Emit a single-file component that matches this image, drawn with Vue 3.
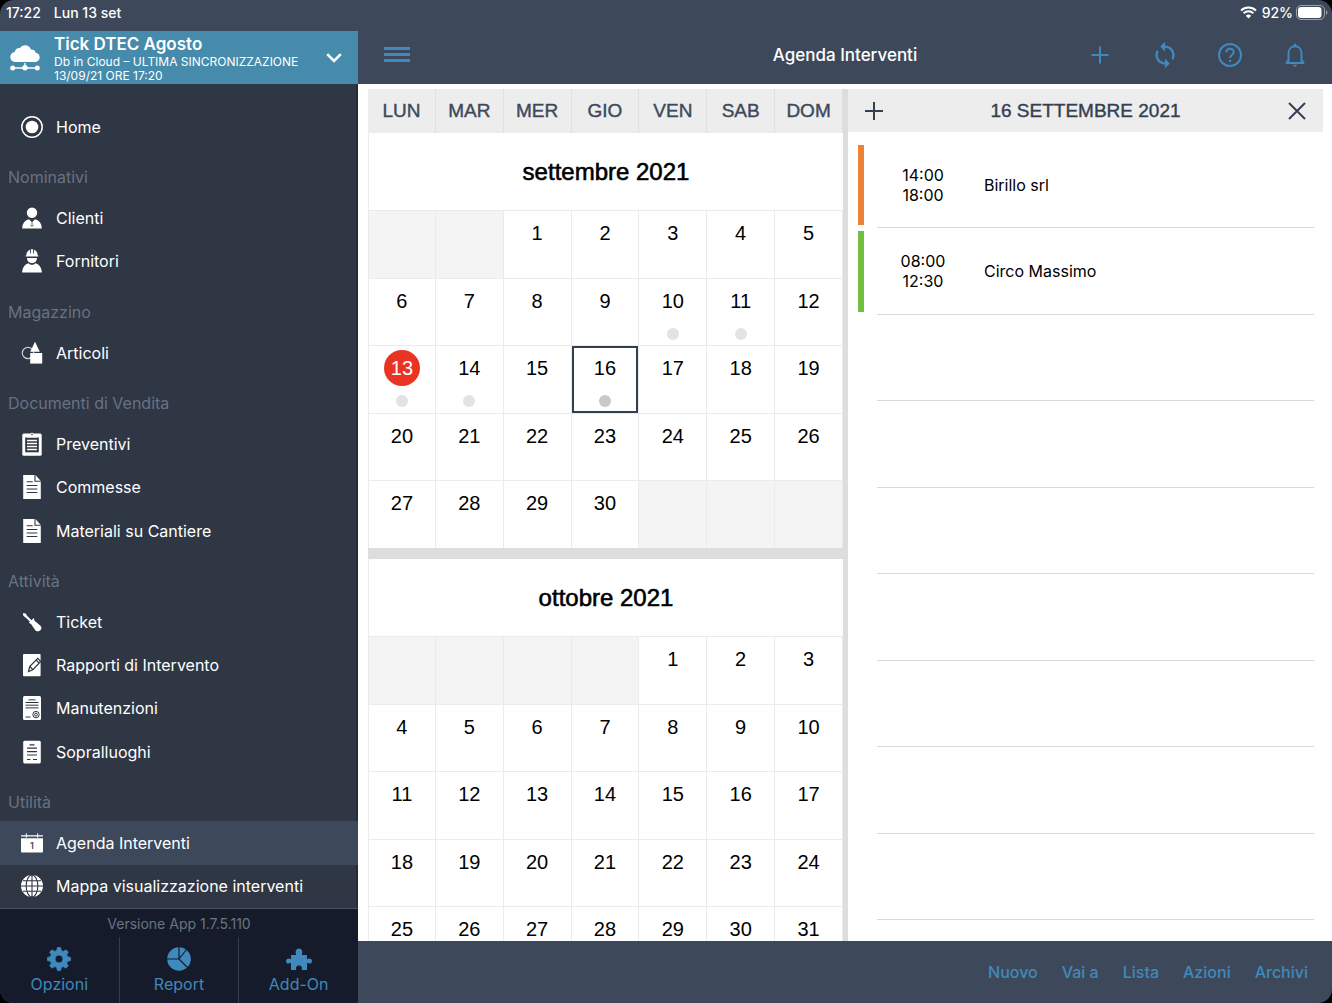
<script setup>
const sections = [
  { items: [{ icon: 'home', label: 'Home' }] },
  {
    title: 'Nominativi',
    items: [
      { icon: 'client', label: 'Clienti' },
      { icon: 'supplier', label: 'Fornitori' },
    ],
  },
  { title: 'Magazzino', items: [{ icon: 'shapes', label: 'Articoli' }] },
  {
    title: 'Documenti di Vendita',
    items: [
      { icon: 'clipboard', label: 'Preventivi' },
      { icon: 'document', label: 'Commesse' },
      { icon: 'document', label: 'Materiali su Cantiere' },
    ],
  },
  {
    title: 'Attività',
    items: [
      { icon: 'screwdriver', label: 'Ticket' },
      { icon: 'report', label: 'Rapporti di Intervento' },
      { icon: 'certificate', label: 'Manutenzioni' },
      { icon: 'survey', label: 'Sopralluoghi' },
    ],
  },
  {
    title: 'Utilità',
    items: [
      { icon: 'agenda', label: 'Agenda Interventi', digit: '1', active: true },
      { icon: 'globe', label: 'Mappa visualizzazione interventi' },
    ],
  },
]

const tools = [
  { icon: 'gear', label: 'Opzioni' },
  { icon: 'pie', label: 'Report' },
  { icon: 'puzzle', label: 'Add-On' },
]

const headerActions = [
  { icon: 'plus', label: 'Aggiungi' },
  { icon: 'sync', label: 'Sincronizza' },
  { icon: 'help', label: 'Aiuto' },
  { icon: 'bell', label: 'Notifiche' },
]

const weekdays = ['LUN', 'MAR', 'MER', 'GIO', 'VEN', 'SAB', 'DOM']

function buildWeeks(offset, days) {
  const count = Math.ceil((offset + days) / 7)
  return Array.from({ length: count }, (_, week) =>
    Array.from({ length: 7 }, (_, i) => {
      const day = week * 7 + i - offset + 1
      return day >= 1 && day <= days ? day : null
    })
  )
}

const months = [
  { name: 'settembre 2021', weeks: buildWeeks(2, 30), busy: [10, 11, 13, 14, 16], today: 13, selected: 16 },
  { name: 'ottobre 2021', weeks: buildWeeks(4, 31), busy: [] },
]

const appointments = [
  { from: '14:00', to: '18:00', name: 'Birillo srl', color: 'orange' },
  { from: '08:00', to: '12:30', name: 'Circo Massimo', color: 'green' },
]
const emptySlots = 7

const footerActions = ['Nuovo', 'Vai a', 'Lista', 'Azioni', 'Archivi']
</script>

<template>
  <div class="app">
    <svg class="sprite" aria-hidden="true">
      <symbol id="i-home" viewBox="0 0 24 24">
        <circle cx="12" cy="12" r="10.2" fill="none" stroke="currentColor" stroke-width="1.5" />
        <circle cx="12" cy="12" r="6.3" fill="currentColor" />
      </symbol>
      <symbol id="i-client" viewBox="0 0 24 24">
        <circle cx="12" cy="6.8" r="5.2" fill="currentColor" />
        <path d="M2.2 22.500c0-4.500 2.300-8.200 6.800-9.300l3 3 3-3c4.500 1.100 6.800 4.800 6.800 9.300z" fill="currentColor" />
        <path d="M10.600 14l1.400-.8 1.400.8-.7 1.400.7 4-1.400 1.400-1.400-1.400.7-4z" fill="var(--nav)" />
        <path d="M11.500 15.500h1l.3 3.600-.8.800-.8-.8z" fill="currentColor" />
      </symbol>
      <symbol id="i-supplier" viewBox="0 0 24 24">
        <path d="M6.300 6.500C6.300 3.300 8 1.400 10 .8v3.700h.8V.3h2.400v4.200h.8V.8c2 .6 3.700 2.500 3.700 5.700l.6.100v1H5.700v-1z" fill="currentColor" />
        <path d="M7 9h10c0 3-2.200 5.200-5 5.200S7 12 7 9z" fill="currentColor" />
        <path d="M2.200 23.500c0-4.500 2.300-8 6.300-9.300 2.100 2 4.900 2 7 0 4 1.300 6.300 4.800 6.300 9.300z" fill="currentColor" />
      </symbol>
      <symbol id="i-shapes" viewBox="0 0 24 24">
        <circle cx="8" cy="12" r="5.700" fill="none" stroke="currentColor" stroke-width="1.200" opacity=".75" />
        <path d="M15 .8l4.800 10H10.200z" fill="currentColor" />
        <path d="M10.200 12h12v10.600h-12z" fill="currentColor" />
      </symbol>
      <symbol id="i-clipboard" viewBox="0 0 24 24">
        <rect x="2.300" y="1.500" width="19.400" height="22.300" rx="1.500" fill="currentColor" />
        <rect x="5.200" y="5.500" width="13.600" height="14.800" fill="var(--nav)" />
        <path d="M6.800 5.600V3.500h3c0-3.800 4.400-3.800 4.400 0h3v2.100z" fill="currentColor" />
        <circle cx="12" cy="2.500" r=".8" fill="var(--nav)" />
        <path d="M7 8.500h10M7 11.500h10M7 14.500h10M7 17.500h10" stroke="currentColor" stroke-width="1.300" />
      </symbol>
      <symbol id="i-document" viewBox="0 0 24 24">
        <path d="M3.200 0h12.300l5.300 6v18H3.200z" fill="currentColor" />
        <path d="M15 0v6.300h5.800M6.700 6.700h6M6.700 10.500h10.600M6.700 14h10.600M6.700 17.500h10.600" fill="none" stroke="var(--nav)" stroke-width="1.100" />
      </symbol>
      <symbol id="i-screwdriver" viewBox="0 0 24 24">
        <path d="M4 4.200l7.500 7.500" stroke="currentColor" stroke-width="2.200" />
        <path d="M3 3l3 .8 1 2.400-1.500 1.200L3.300 5.400z" fill="currentColor" />
        <path d="M8.800 12.800l5-4.700.7 2.600 6 5c2.900 3.300-1.900 7.500-5 4.700l-4.500-6.400z" fill="currentColor" />
      </symbol>
      <symbol id="i-report" viewBox="0 0 24 24">
        <rect x="3" y="1" width="17.600" height="22.200" rx="1" fill="currentColor" />
        <path d="M8.500 18.500l1.200-5 8-8.200 3 3.200-7.800 8.200zM9.700 13.500l3.200 3.200M16 7l3.200 3.200" fill="currentColor" stroke="var(--nav)" stroke-width="1.200" />
      </symbol>
      <symbol id="i-certificate" viewBox="0 0 24 24">
        <rect x="3" y="0" width="18" height="24" rx="1.500" fill="currentColor" />
        <path d="M8.500 3.800h7M5.500 6.500h13M5.500 9.200h13M5.500 11.900h13M5.500 21h5" stroke="var(--nav)" stroke-width="1" />
        <circle cx="16" cy="18.600" r="3.200" fill="none" stroke="var(--nav)" stroke-width="1" />
        <circle cx="16" cy="18.600" r="1.400" fill="none" stroke="var(--nav)" stroke-width="1" />
      </symbol>
      <symbol id="i-survey" viewBox="0 0 24 24">
        <rect x="3.200" y=".8" width="17.600" height="22.600" rx="1.500" fill="currentColor" />
        <path d="M9.500 4.800h5M7 8.200h10M7 11.700h10M7 15h10M7 19.500h3.500M13 19.500h4" stroke="var(--nav)" stroke-width="1.200" />
      </symbol>
      <symbol id="i-agenda" viewBox="0 0 24 24">
        <path d="M1 5.500V4.200h22v1.300zM5.800 2.500h1.200v4H5.800zM17 2.500h1.200v4H17z" fill="currentColor" />
        <path d="M1 7.200h22v13.600q0 .8-.8.800H1.800q-.8 0-.8-.8z" fill="currentColor" />
      </symbol>
      <symbol id="i-globe" viewBox="0 0 24 24">
        <circle cx="12" cy="12" r="11" fill="currentColor" />
        <path d="M12 1v22M1 12h22M3 6.800h18M3 17.200h18" fill="none" stroke="var(--nav)" stroke-width="1.100" />
        <ellipse cx="12" cy="12" rx="5.800" ry="11" fill="none" stroke="var(--nav)" stroke-width="1.100" />
      </symbol>
      <symbol id="i-gear" viewBox="0 0 24 24">
        <path fill="currentColor" fill-rule="evenodd" stroke="currentColor" stroke-width=".8" stroke-linejoin="round" d="M10.400.5h3.200l.7 3 2.100.9 2.600-1.600 2.300 2.300-1.600 2.600.9 2 2.900.7v3.200l-2.900.7-.9 2 1.600 2.600-2.300 2.300-2.600-1.600-2.100.9-.7 3h-3.200l-.7-3-2.100-.9L5 21.200l-2.300-2.300 1.600-2.600-.9-2-2.900-.7v-3.200l2.900-.7.9-2-1.600-2.600L5 2.800l2.600 1.600 2.100-.9zM12 8a4 4 0 1 0 0 8 4 4 0 0 0 0-8z" />
      </symbol>
      <symbol id="i-pie" viewBox="0 0 24 24">
        <circle cx="12" cy="12" r="11.800" fill="currentColor" />
        <path d="M12 0v12M0 12h12l8.500 8.500M12 12l7.500-9.500" fill="none" stroke="var(--foot)" stroke-width="1.200" />
      </symbol>
      <symbol id="i-puzzle" viewBox="0 0 26 24">
        <path fill="currentColor" d="M5 8h5.200C8.900 4.700 10 1.500 13 1.500s4.100 3.200 2.800 6.500H21v4.300c2.200-1.500 5-1 5 1.700s-2.800 3.200-5 1.700V23h-5.300c.9-3-.5-4.500-2.700-4.500s-3.600 1.500-2.700 4.500H5v-7.300c-2.200 1.500-5 1-5-1.700s2.800-3.200 5-1.700z" />
      </symbol>
      <symbol id="i-plus" viewBox="0 0 24 24">
        <path d="M12 3.500v17M3.500 12h17" stroke="currentColor" stroke-width="2" />
      </symbol>
      <symbol id="i-sync" viewBox="2 2 20 20">
        <path fill="currentColor" d="M12 4V1L8 5l4 4V6c3.310 0 6 2.690 6 6 0 1.010-.25 1.970-.7 2.800l1.460 1.460C19.540 15.030 20 13.570 20 12c0-4.420-3.580-8-8-8zm0 14c-3.310 0-6-2.690-6-6 0-1.010.25-1.970.7-2.800L5.240 7.740C4.460 8.970 4 10.430 4 12c0 4.420 3.580 8 8 8v3l4-4-4-4v3z" />
      </symbol>
      <symbol id="i-help" viewBox="0 0 24 24">
        <circle cx="12" cy="12" r="11" fill="none" stroke="currentColor" stroke-width="2" />
        <path d="M8.400 9.300c0-4.700 7.300-4.700 7.300-.2 0 2.800-3.600 3-3.600 6" fill="none" stroke="currentColor" stroke-width="2" />
        <circle cx="12.100" cy="18" r="1.300" fill="currentColor" />
      </symbol>
      <symbol id="i-bell" viewBox="0 0 24 24">
        <path d="M2.700 20h18.600M5.500 19.500V10.300c0-4 2.600-7 6.500-7s6.500 3 6.500 7v9.200M3.500 19.500l2-2.500M20.500 19.500l-2-2.500" fill="none" stroke="currentColor" stroke-width="2" />
        <path d="M10.500 3c0-3.500 3-3.500 3 0zM9.800 21.800h4.400c-.4 2.400-4 2.400-4.400 0z" fill="currentColor" />
      </symbol>
    </svg>

    <header class="status">
      <time>17:22</time>
      <span class="status-date">Lun 13 set</span>
      <svg class="wifi" viewBox="0 0 17 13" aria-hidden="true">
        <path d="M1 4.600a10.800 10.800 0 0 1 15 0M3.600 7.300a7 7 0 0 1 9.800 0" fill="none" stroke="currentColor" stroke-width="2" />
        <path d="M8.500 12.500L5.800 9.700a3.900 3.900 0 0 1 5.400 0z" fill="currentColor" />
      </svg>
      <span>92%</span>
      <svg class="battery" viewBox="0 0 32 15" aria-hidden="true">
        <rect x=".5" y=".5" width="28" height="14" rx="4.500" fill="none" stroke="#9aa1ac" />
        <rect x="2" y="2" width="23.500" height="11" rx="3" fill="#fff" />
        <path d="M30 5.200q1.500.8 1.500 2.300T30 9.800z" fill="#9aa1ac" />
      </svg>
    </header>

    <div class="body">
      <aside class="sidebar">
        <button class="account" type="button">
          <svg class="cloud" viewBox="0 0 30 26" aria-hidden="true">
            <path fill="currentColor" d="M6.500 17C2.500 17 .3 14.800.3 11.900c0-2.900 2-4.700 4.400-5C5.300 4 7.600 2.600 10 3.100 11.200 1.100 13 .3 15 .3c3 0 5.200 1.700 6 4.300 2.500-.2 4.200 1.100 4.600 3.100 2.600.5 4.100 2.200 4.100 4.500 0 2.900-2.200 4.800-5.500 4.800z" />
            <path d="M15 18v5M2.500 23h25" stroke="currentColor" stroke-width="1.400" />
            <circle cx="2.700" cy="23" r="2.500" fill="currentColor" />
            <circle cx="15" cy="22.800" r="2.700" fill="currentColor" />
            <circle cx="27.300" cy="23" r="2.500" fill="currentColor" />
          </svg>
          <span class="account-text">
            <strong>Tick DTEC Agosto</strong>
            <small>Db in Cloud – ULTIMA SINCRONIZZAZIONE</small>
            <small>13/09/21 ORE 17:20</small>
          </span>
          <svg class="chevron" viewBox="0 0 16 10" aria-hidden="true">
            <path d="M1.200 1.200L8 8l6.800-6.800" fill="none" stroke="currentColor" stroke-width="2.600" />
          </svg>
        </button>

        <nav class="nav">
          <template v-for="(section, s) in sections" :key="s">
            <h2 v-if="section.title" class="nav-title">{{ section.title }}</h2>
            <a
              v-for="item in section.items"
              :key="item.label"
              href="#"
              class="nav-item"
              :class="{ active: item.active }"
            >
              <svg class="nav-icon" aria-hidden="true">
                <use :href="'#i-' + item.icon" />
                <text v-if="item.digit" class="icon-digit" x="12" y="18" text-anchor="middle">{{ item.digit }}</text>
              </svg>
              {{ item.label }}
            </a>
          </template>
        </nav>

        <div class="side-foot">
          <p class="version">Versione App 1.7.5.110</p>
          <div class="tools">
            <button v-for="tool in tools" :key="tool.label" type="button" class="tool">
              <svg class="tool-icon" aria-hidden="true"><use :href="'#i-' + tool.icon" /></svg>
              {{ tool.label }}
            </button>
          </div>
        </div>
      </aside>

      <main class="main">
        <div class="topbar">
          <button type="button" class="menu" aria-label="Menu"><i /><i /><i /></button>
          <h1>Agenda Interventi</h1>
          <div class="top-actions">
            <button v-for="action in headerActions" :key="action.icon" type="button" :aria-label="action.label">
              <svg aria-hidden="true"><use :href="'#i-' + action.icon" /></svg>
            </button>
          </div>
        </div>

        <div class="content">
          <section class="calendar">
            <div class="weekdays">
              <span v-for="day in weekdays" :key="day">{{ day }}</span>
            </div>
            <div class="months">
              <table v-for="month in months" :key="month.name" class="month">
                <caption>{{ month.name }}</caption>
                <tbody>
                  <tr v-for="(week, w) in month.weeks" :key="w">
                    <td
                      v-for="(day, d) in week"
                      :key="d"
                      :class="{ blank: !day, selected: day && day === month.selected }"
                    >
                      <button
                        v-if="day"
                        type="button"
                        class="day"
                        :class="{ today: day === month.today }"
                      >
                        <span class="number">{{ day }}</span>
                        <span v-if="month.busy.includes(day)" class="dot" />
                      </button>
                    </td>
                  </tr>
                </tbody>
              </table>
            </div>
          </section>

          <section class="agenda">
            <div class="agenda-head">
              <button type="button" aria-label="Nuovo intervento">
                <svg viewBox="0 0 18 18" aria-hidden="true"><path d="M9 0v18M0 9h18" stroke="currentColor" stroke-width="2" /></svg>
              </button>
              <h2>16 SETTEMBRE 2021</h2>
              <button type="button" aria-label="Chiudi">
                <svg viewBox="0 0 18 18" aria-hidden="true"><path d="M1 1l16 16M17 1L1 17" stroke="currentColor" stroke-width="2" /></svg>
              </button>
            </div>
            <ul class="slots">
              <li v-for="item in appointments" :key="item.name">
                <span class="marker" :class="item.color" />
                <div class="slot">
                  <span class="hours"><time>{{ item.from }}</time><time>{{ item.to }}</time></span>
                  <span>{{ item.name }}</span>
                </div>
              </li>
              <li v-for="n in emptySlots" :key="n">
                <span class="marker" />
                <div class="slot" />
              </li>
            </ul>
          </section>
        </div>

        <footer class="bottombar">
          <button v-for="label in footerActions" :key="label" type="button">{{ label }}</button>
        </footer>
      </main>
    </div>
  </div>
</template>

<style>
body {
  margin: 0;
  background: #000;
}
</style>

<style scoped>
* {
  box-sizing: border-box;
}

.app {
  --bar: #3d495a;
  --nav: #2f3644;
  --nav-active: #3d495a;
  --foot: #151b2a;
  --blue: #3f89bc;
  display: flex;
  flex-direction: column;
  height: 100vh;
  border-radius: 14px;
  overflow: hidden;
  background: var(--bar);
  font-family: Inter, "Liberation Sans", sans-serif;
  font-size: 16px;
  color: #000;
}

h1,
h2,
p,
ul {
  margin: 0;
  padding: 0;
}

button {
  padding: 0;
  border: 0;
  background: none;
  color: inherit;
  font: inherit;
}

.sprite {
  position: absolute;
  width: 0;
  height: 0;
}

.sprite symbol {
  overflow: visible;
}

.status {
  display: flex;
  align-items: center;
  flex: none;
  height: 31px;
  padding: 0 4px 6px 6px;
  color: #fff;
  font-size: 14px;
  font-weight: 500;
}

.status-date {
  margin: 0 auto 0 13px;
}

.wifi {
  width: 17px;
  height: 13px;
  margin-right: 5px;
}

.battery {
  width: 32px;
  height: 15px;
  margin-left: 3px;
}

.body {
  display: flex;
  flex: 1;
  min-height: 0;
}

.sidebar {
  display: flex;
  flex-direction: column;
  flex: none;
  width: 358px;
  background: var(--nav);
  color: #fff;
}

.account {
  display: flex;
  align-items: center;
  flex: none;
  height: 53px;
  padding: 0 16px 0 10px;
  background: #468bab;
  text-align: left;
}

.cloud {
  width: 30px;
  height: 26px;
  margin-right: 14px;
}

.account-text {
  display: flex;
  flex-direction: column;
  flex: 1;
}

.account-text strong {
  font-size: 17px;
  font-weight: 600;
  line-height: 22px;
}

.account-text small {
  font-size: 12px;
  line-height: 14px;
}

.chevron {
  width: 16px;
  height: 10px;
}

.nav {
  display: flex;
  flex-direction: column;
  flex: 1;
  padding-top: 21px;
  border-bottom: 1px solid #485363;
  box-shadow: inset -2px 0 0 #252b38;
}

.nav-title {
  flex: none;
  height: 48px;
  padding: 19px 8px 0;
  color: #677282;
  font-size: 16px;
  font-weight: 400;
  line-height: 20px;
}

.nav-item {
  display: flex;
  align-items: center;
  flex: 1;
  padding-left: 20px;
  color: #fff;
  font-size: 16px;
  text-decoration: none;
}

.nav-item.active {
  background: var(--nav-active);
}

.nav-icon {
  width: 24px;
  height: 24px;
  margin-right: 12px;
}

.icon-digit {
  fill: var(--nav-active);
  font-size: 9px;
  font-weight: 600;
}

.side-foot {
  flex: none;
  background: var(--foot);
}

.version {
  height: 28px;
  color: #6b7480;
  font-size: 14px;
  line-height: 30px;
  text-align: center;
}

.tools {
  display: flex;
  height: 66px;
}

.tool {
  display: flex;
  flex-direction: column;
  align-items: center;
  flex: 1;
  padding-top: 10px;
  color: var(--blue);
  font-size: 16px;
  line-height: 26px;
}

.tool + .tool {
  border-left: 1px solid #343b49;
}

.tool-icon {
  width: 26px;
  height: 24px;
}

.main {
  display: flex;
  flex-direction: column;
  flex: 1;
  min-width: 0;
}

.topbar {
  display: grid;
  grid-template-columns: 1fr auto 1fr;
  align-items: center;
  flex: none;
  height: 53px;
  padding-bottom: 6px;
  color: #fff;
}

.topbar h1 {
  font-size: 17px;
  font-weight: 500;
}

.menu {
  display: flex;
  flex-direction: column;
  gap: 3px;
  width: 26px;
  margin-left: 26px;
}

.menu i {
  height: 3px;
  background: var(--blue);
}

.top-actions {
  display: flex;
  justify-content: flex-end;
  padding-right: 5px;
  color: var(--blue);
}

.top-actions button {
  display: flex;
  justify-content: center;
  width: 65px;
}

.top-actions svg {
  width: 24px;
  height: 24px;
  overflow: visible;
}

.content {
  display: flex;
  flex: 1;
  min-height: 0;
  padding: 5px 9px 0 10px;
  background: #fff;
}

.calendar {
  display: flex;
  flex-direction: column;
  flex: 1 1 0;
  box-sizing: content-box;
  border-right: 5px solid #ddd;
  font-family: "Liberation Sans", Arial, sans-serif;
  overflow: hidden;
}

.weekdays {
  display: grid;
  grid-template-columns: repeat(7, 1fr);
  flex: none;
  height: 44px;
  background: #ededed;
  color: #3d495a;
  font-size: 19px;
  line-height: 44px;
  text-align: center;
  -webkit-text-stroke: 0.4px currentColor;
}

.weekdays span {
  border-right: 1px solid #e0e0e0;
}

.months {
  display: flex;
  flex-direction: column;
  gap: 11px;
  flex: 1;
  min-height: 0;
  background: #ddd;
  overflow: hidden;
}

.month {
  flex: none;
  width: 100%;
  height: 338px;
  border-spacing: 0;
  table-layout: fixed;
  background: #fff;
}

.month caption {
  height: 77px;
  background: #fff;
  border-left: 1px solid #ebebeb;
  font-size: 24px;
  line-height: 78px;
  -webkit-text-stroke: 0.6px currentColor;
}

.month td {
  padding: 0;
  border: solid #ebebeb;
  border-width: 1px 1px 0 0;
  vertical-align: top;
}

.month td:first-child {
  border-left-width: 1px;
}

.month .blank {
  background: #f4f4f4;
}

.month .selected {
  box-shadow: inset 0 0 0 2px #343f51;
}

.day {
  display: flex;
  flex-direction: column;
  align-items: center;
  width: 100%;
  height: 66px;
  padding-top: 4px;
  font-size: 20px;
}

.number {
  width: 36px;
  height: 36px;
  border-radius: 50%;
  line-height: 37px;
}

.today .number {
  background: #e93323;
  color: #fff;
}

.dot {
  width: 12px;
  height: 12px;
  margin-top: 9px;
  border-radius: 50%;
  background: #e3e3e3;
}

.selected .dot {
  background: #c8c8c8;
}

.agenda {
  display: flex;
  flex-direction: column;
  flex: 1 1 0;
}

.agenda-head {
  display: flex;
  align-items: center;
  justify-content: space-between;
  flex: none;
  height: 43px;
  padding: 0 17px;
  background: #ededed;
  color: #343f51;
}

.agenda-head h2 {
  font-family: "Liberation Sans", Arial, sans-serif;
  font-size: 19px;
  font-weight: 400;
  line-height: 44px;
  -webkit-text-stroke: 0.4px currentColor;
}

.agenda-head button {
  display: flex;
}

.agenda-head svg {
  width: 18px;
  height: 18px;
}

.slots {
  display: flex;
  flex-direction: column;
  flex: 1;
  padding: 10px 9px 21px 10px;
  list-style: none;
}

.slots li {
  display: flex;
  flex: 1;
}

.marker {
  width: 6px;
  margin: 3px 13px 3px 0;
}

.orange {
  background: #ed8136;
}

.green {
  background: #71bf3f;
}

.slot {
  display: flex;
  align-items: center;
  flex: 1;
  border-bottom: 1px solid #d9d9d9;
  font-size: 16px;
}

.hours {
  display: flex;
  flex-direction: column;
  width: 92px;
  margin-right: 15px;
  line-height: 20px;
  text-align: center;
}

.bottombar {
  display: flex;
  align-items: center;
  justify-content: flex-end;
  gap: 24px;
  flex: none;
  height: 62px;
  padding: 0 24px 0 0;
  color: var(--blue);
  font-size: 16px;
  font-weight: 500;
}
</style>
